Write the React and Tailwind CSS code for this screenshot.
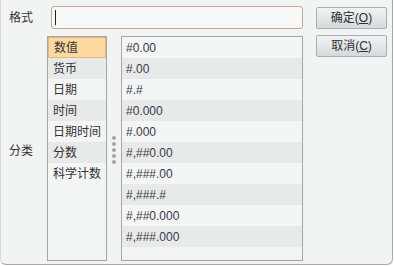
import React from "react";

const categories = ["数值", "货币", "日期", "时间", "日期时间", "分数", "科学计数"];
const formats = [
  "#0.00",
  "#.00",
  "#.#",
  "#0.000",
  "#.000",
  "#,##0.00",
  "#,###.00",
  "#,###.#",
  "#,##0.000",
  "#,###.000",
];

const font = { fontFamily: '"Liberation Sans", "Noto Sans CJK SC", sans-serif' };

const Button = ({ label, hotkey }) => (
  <button className="w-[71px] h-[22px] rounded-[2px] border border-[#a9aeb3] bg-gradient-to-b from-[#f1f3f4] via-[#e4e7e9] to-[#d5d9dc] text-[12px] text-[#2e2e2e] leading-none">
    {label}(<span className="underline">{hotkey}</span>)
  </button>
);

const App = () => {
  return (
    <div
      style={font}
      className="w-[394px] h-[266px] overflow-hidden"
    >
      <div className="w-[393px] h-[265px] bg-[#f2f4f4] border-b border-r border-l border-[#a7a9ab] border-l-[#d6d8d9] rounded-b-[6px] flex pt-[6px]">
        {/* left area */}
        <div className="flex flex-col w-[302px]">
          <div className="flex items-center h-[23px]">
            <span className="w-[49px] pl-[8px] text-[12px] text-[#333]">格式</span>
            <div className="flex-1 h-[23px] ml-[1px] rounded-[3px] border border-[#c8a592] bg-[#f7f8f8] flex items-center pl-[3px]">
              <div className="w-px h-[15px] bg-[#222]" />
            </div>
          </div>
          <div className="flex mt-[7px] h-[225px]">
            <div className="w-[46px] flex items-center pl-[8px] text-[12px] text-[#333]">
              <span className="mt-[5px]">分类</span>
            </div>
            <div className="w-[60px] border border-[#a3a7ab] bg-[#f3f4f4]">
              {categories.map((c, i) => (
                <div
                  key={c}
                  className={`h-[21px] flex items-center pl-[5px] text-[12px] text-[#333] whitespace-nowrap ${
                    i === 0
                      ? "bg-[#fdd9a0] border border-[#e7b777] pl-[4px]"
                      : i % 2 === 1
                      ? "bg-[#e8e9e9]"
                      : "bg-[#f4f5f5]"
                  }`}
                >
                  {c}
                </div>
              ))}
            </div>
            <div className="w-[14px] flex flex-col items-center justify-center gap-[2px] pt-[2px]">
              {[0, 1, 2, 3, 4].map((d) => (
                <div key={d} className="w-[4px] h-[4px] rounded-full bg-[#a3a5a7]" />
              ))}
            </div>
            <div className="flex-1 border border-[#a3a7ab] bg-[#f3f4f4]">
              {formats.map((f, i) => (
                <div
                  key={f}
                  className={`h-[21px] flex items-center pl-[4px] text-[12px] text-[#3a3a48] ${
                    i % 2 === 1 ? "bg-[#e8e9e9]" : "bg-[#f4f5f5]"
                  }`}
                >
                  {f}
                </div>
              ))}
            </div>
          </div>
        </div>
        {/* buttons */}
        <div className="ml-[13px] flex flex-col gap-[6px] pt-[1px]">
          <Button label="确定" hotkey="O" />
          <Button label="取消" hotkey="C" />
        </div>
      </div>
    </div>
  );
};

export default App;
